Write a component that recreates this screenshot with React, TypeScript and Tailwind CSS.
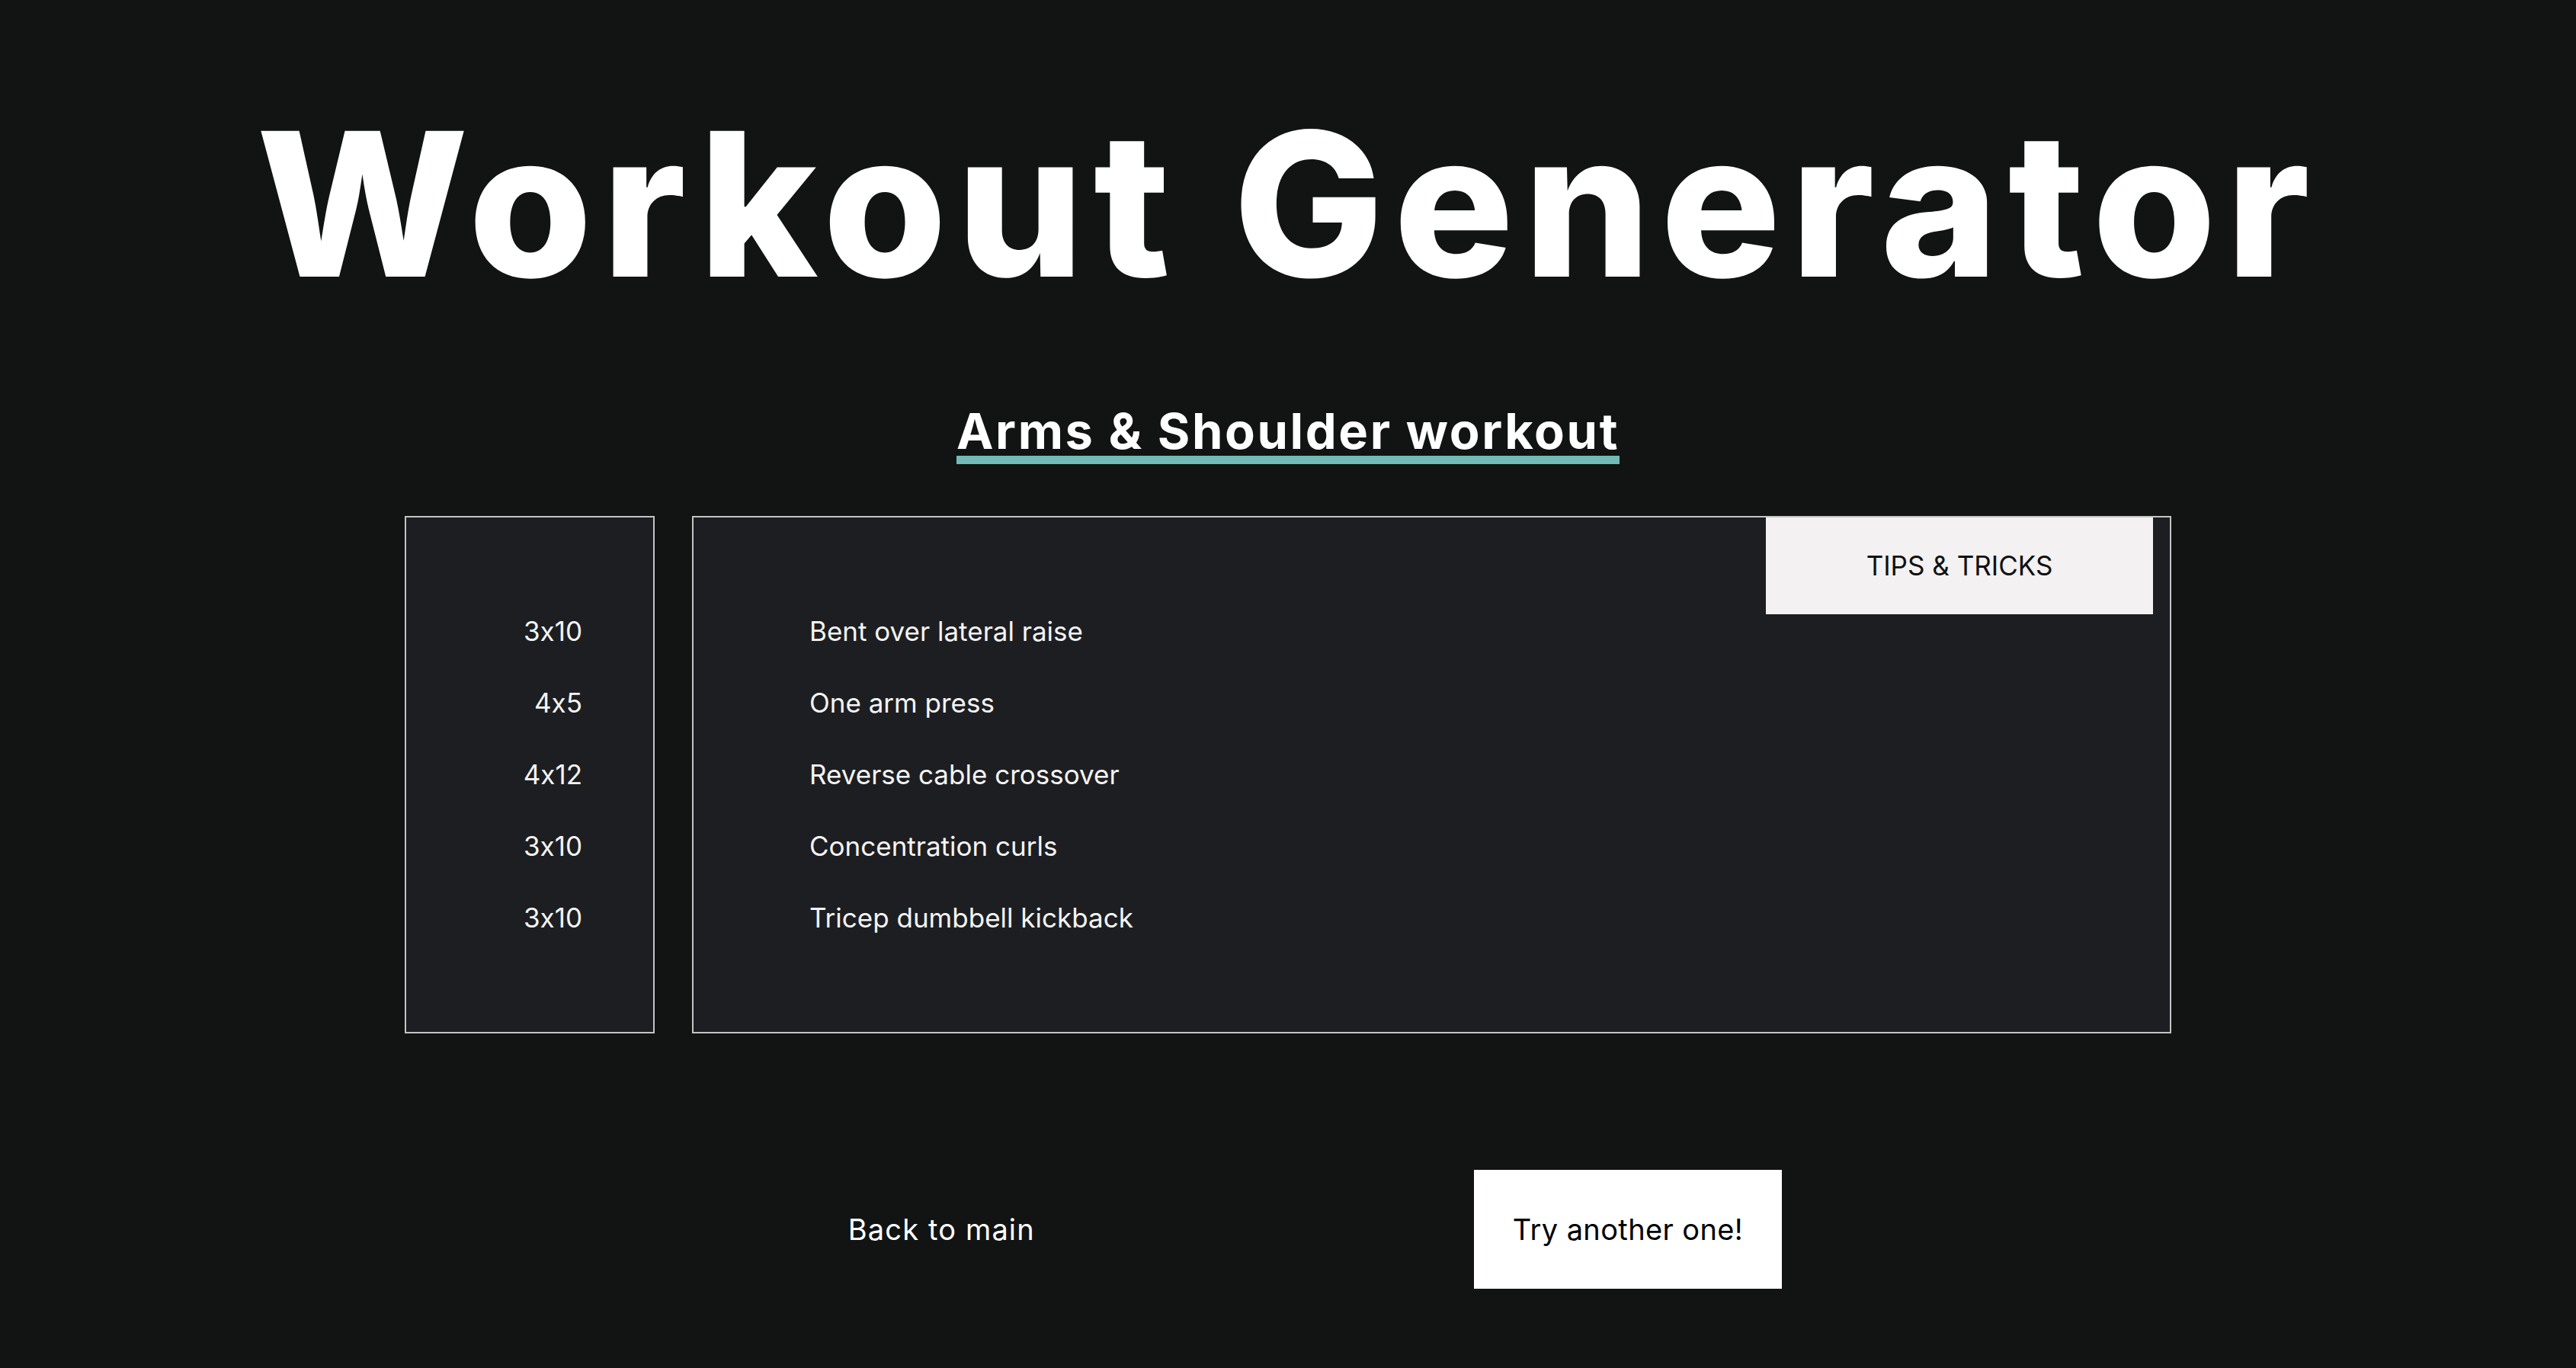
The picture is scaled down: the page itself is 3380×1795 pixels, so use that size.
const sets = [
  { reps: "3x10", name: "Bent over lateral raise" },
  { reps: "4x5", name: "One arm press" },
  { reps: "4x12", name: "Reverse cable crossover" },
  { reps: "3x10", name: "Concentration curls" },
  { reps: "3x10", name: "Tricep dumbbell kickback" },
];

export default function App() {
  return (
    <main className="min-h-screen w-full bg-[#111413] text-white font-['Inter',sans-serif] [font-feature-settings:'calt'_0] flex flex-col items-center">
      {/* Title */}
      <h1 className="mt-[136px] text-[263px] leading-none font-extrabold tracking-[0.048em]">
        Workout Generator
      </h1>

      <h2 className="mt-[134px] inline-block text-[65px] leading-none font-bold tracking-[0.04em] border-b-[11px] border-[#72bab5]">
        Arms &amp; Shoulder workout
      </h2>

      {/* Workout panels */}
      <section className="mt-[68px] flex gap-[49px] h-[679px]">
        <div className="w-[328px] bg-[#1d1e21] border-2 border-[#c4c4c4] flex flex-col justify-center items-end pr-[93px]">
          {sets.map((s, i) => (
            <div key={i} className="h-[94px] flex items-center text-[35px] text-[#f4f4f4]">
              {s.reps}
            </div>
          ))}
        </div>

        <div className="relative w-[1941px] bg-[#1d1e21] border-2 border-[#c4c4c4] flex flex-col justify-center pl-[152px]">
          <button className="absolute top-0 right-[22px] w-[508px] h-[127px] bg-[#f3f1f2] text-[#111] text-[35px] flex items-center justify-center">
            TIPS &amp; TRICKS
          </button>
          {sets.map((s, i) => (
            <div key={i} className="h-[94px] flex items-center text-[35px] text-[#f4f4f4]">
              {s.name}
            </div>
          ))}
        </div>
      </section>

      {/* Actions */}
      <div className="mt-[179px] ml-[20px] flex items-center gap-[525px]">
        <button className="h-[156px] px-[51px] text-[38px] tracking-[0.03em] text-white flex items-center">
          Back to main
        </button>
        <button className="h-[156px] px-[51px] bg-white text-black text-[38px] tracking-[0.01em] flex items-center">
          Try another one!
        </button>
      </div>
    </main>
  );
}
